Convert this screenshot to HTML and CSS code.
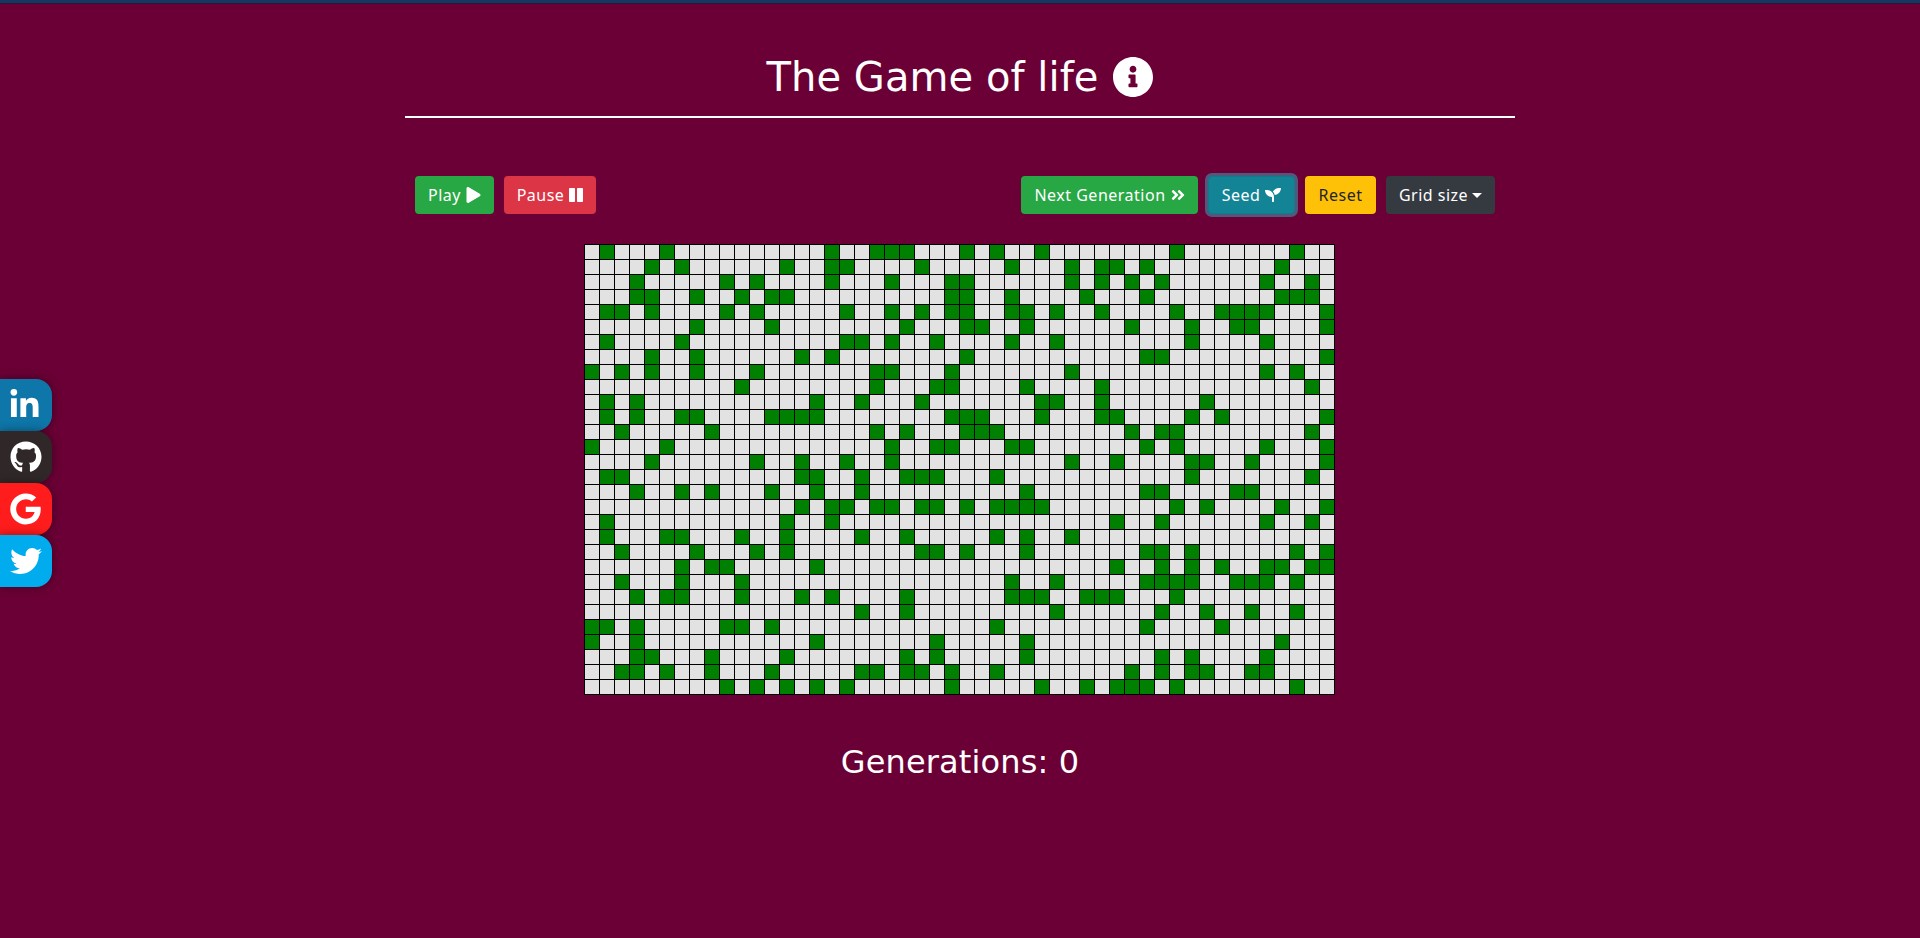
FILE: index.html
```html
<!DOCTYPE html>
<html lang="en">
<head>
<meta charset="utf-8">
<title>The Game of life</title>
<link rel="stylesheet" href="styles.css">
</head>
<body>
<div class="topbar"></div>
<nav class="social">
  <a class="social-link linkedin"><svg class="ico-in" viewBox="0 0 448 512"><path d="M100.28 448H7.4V148.900h92.880zM53.790 108.100C24.090 108.100 0 83.500 0 53.800a53.790 53.790 0 0 1 107.580 0c0 29.700-24.100 54.300-53.790 54.300zM447.900 448h-92.680V302.400c0-34.700-.7-79.200-48.290-79.200-48.290 0-55.690 37.700-55.690 76.700V448h-92.780V148.900h89.080v40.800h1.300c12.400-23.500 42.690-48.300 87.880-48.300 94 0 111.280 61.900 111.280 142.300V448z"/></svg></a>
  <a class="social-link github"><svg class="ico-gh" viewBox="0 0 496 512"><path d="M165.900 397.400c0 2-2.300 3.600-5.200 3.600-3.300.3-5.600-1.300-5.600-3.600 0-2 2.300-3.600 5.200-3.600 3-.3 5.600 1.300 5.600 3.600zm-31.100-4.500c-.7 2 1.300 4.300 4.300 4.900 2.600 1 5.600 0 6.200-2s-1.300-4.300-4.300-5.200c-2.600-.7-5.500.3-6.200 2.300zm44.200-1.700c-2.900.7-4.900 2.600-4.600 4.900.3 2 2.900 3.300 5.900 2.600 2.900-.7 4.900-2.600 4.600-4.600-.3-1.900-3-3.200-5.900-2.900zM244.800 8C106.100 8 0 113.300 0 252c0 110.900 69.800 205.800 169.500 239.200 12.800 2.300 17.300-5.600 17.300-12.100 0-6.200-.3-40.400-.3-61.400 0 0-70 15-84.700-29.800 0 0-11.400-29.100-27.800-36.600 0 0-22.900-15.700 1.600-15.400 0 0 24.900 2 38.600 25.800 21.900 38.600 58.600 27.500 72.900 20.900 2.300-16 8.800-27.100 16-33.700-55.900-6.200-112.300-14.300-112.300-110.500 0-27.500 7.600-41.300 23.600-58.900-2.600-6.500-11.100-33.300 2.600-67.900 20.900-6.500 69 27 69 27 20-5.600 41.500-8.500 62.800-8.500s42.800 2.900 62.800 8.500c0 0 48.100-33.600 69-27 13.700 34.700 5.200 61.400 2.600 67.900 16 17.700 25.800 31.500 25.800 58.900 0 96.500-58.900 104.200-114.800 110.500 9.200 7.900 17 22.900 17 46.400 0 33.700-.3 75.400-.3 83.600 0 6.500 4.600 14.400 17.300 12.100C428.200 457.800 496 362.900 496 252 496 113.300 383.500 8 244.800 8z"/></svg></a>
  <a class="social-link google"><svg class="ico-gg" viewBox="0 0 488 512"><path d="M488 261.800C488 403.300 391.100 504 248 504 110.800 504 0 393.200 0 256S110.800 8 248 8c66.800 0 123 24.500 166.300 64.900l-67.500 64.900C258.500 52.600 94.300 116.600 94.300 256c0 86.500 69.100 156.600 153.700 156.600 98.200 0 135-70.400 140.800-106.900H248v-85.300h236.100c2.300 12.700 3.900 24.900 3.900 41.400z"/></svg></a>
  <a class="social-link twitter"><svg class="ico-tw" viewBox="0 0 512 512"><path d="M459.370 151.716c.325 4.548.325 9.097.325 13.645 0 138.720-105.583 298.558-298.558 298.558-59.452 0-114.680-17.219-161.137-47.106 8.447.974 16.568 1.299 25.340 1.299 49.055 0 94.213-16.568 130.274-44.832-46.132-.975-84.792-31.188-98.112-72.772 6.498.974 12.995 1.624 19.818 1.624 9.421 0 18.843-1.300 27.614-3.573-48.081-9.747-84.143-51.980-84.143-102.985v-1.299c13.969 7.797 30.214 12.670 47.431 13.319-28.264-18.843-46.781-51.005-46.781-87.391 0-19.492 5.197-37.360 14.294-52.954 51.655 63.675 129.300 105.258 216.365 109.807-1.624-7.797-2.599-15.918-2.599-24.040 0-57.828 46.782-104.934 104.934-104.934 30.213 0 57.502 12.670 76.670 33.137 23.715-4.548 46.456-13.320 66.599-25.340-7.798 24.366-24.366 44.833-46.132 57.827 21.117-2.273 41.584-8.122 60.426-16.243-14.292 20.791-32.161 39.308-52.628 54.253z"/></svg></a>
</nav>
<main class="container">
  <h1 class="title"><span class="title-text">The Game of life</span>
    <svg class="info" viewBox="8 8 496 496"><path d="M256 8C119.043 8 8 119.083 8 256c0 136.997 111.043 248 248 248s248-111.003 248-248C504 119.083 392.957 8 256 8zm0 110c23.196 0 42 18.804 42 42s-18.804 42-42 42-42-18.804-42-42 18.804-42 42-42zm56 254c0 6.627-5.373 12-12 12h-88c-6.627 0-12-5.373-12-12v-24c0-6.627 5.373-12 12-12h12v-64h-12c-6.627 0-12-5.373-12-12v-24c0-6.627 5.373-12 12-12h64c6.627 0 12 5.373 12 12v100h12c6.627 0 12 5.373 12 12v24z"/></svg>
  </h1>
  <div class="controls">
    <div class="group">
      <button class="btn play">Play <svg class="i-play" viewBox="0 0 448 512"><path d="M424.400 214.700L72.400 6.600C43.800-10.300 0 6.100 0 47.900V464c0 37.500 40.700 60.100 72.400 41.300l352-208c31.400-18.500 31.500-64.100 0-82.600z"/></svg></button>
      <button class="btn pause">Pause <svg class="i-pause" viewBox="0 0 448 512"><path d="M160 479H32c-18 0-32-14-32-32V63c0-18 14-32 32-32h128c18 0 32 14 32 32v384c0 18-14 32-32 32zm288-32V63c0-18-14-32-32-32H288c-18 0-32 14-32 32v384c0 18 14 32 32 32h128c18 0 32-14 32-32z"/></svg></button>
    </div>
    <div class="group">
      <button class="btn next">Next Generation <svg class="i-next" viewBox="0 0 448 512"><path d="M224.300 273l-136 136c-9.400 9.400-24.600 9.400-33.900 0l-22.600-22.600c-9.400-9.400-9.400-24.600 0-33.900l96.400-96.400-96.400-96.400c-9.400-9.400-9.400-24.600 0-33.900L54.300 103c9.400-9.400 24.600-9.400 33.900 0l136 136c9.500 9.400 9.500 24.600.1 34zm192-34l-136-136c-9.400-9.400-24.600-9.400-33.900 0l-22.600 22.600c-9.400 9.400-9.400 24.600 0 33.900l96.400 96.400-96.400 96.400c-9.400 9.400-9.400 24.600 0 33.900l22.600 22.600c9.400 9.400 24.600 9.400 33.900 0l136-136c9.400-9.200 9.400-24.400 0-33.800z"/></svg></button>
      <button class="btn seed">Seed <svg class="i-seed" viewBox="0 0 512 512"><path d="M64 96H0c0 123.700 100.300 224 224 224v144c0 8.800 7.200 16 16 16h32c8.800 0 16-7.200 16-16V320C288 196.300 187.700 96 64 96zm384-64c-84.200 0-157.400 46.500-195.700 115.200 27.700 30.200 48.200 66.900 59 107.600C424 243.100 512 147.900 512 32h-64z"/></svg></button>
      <button class="btn reset">Reset</button>
      <button class="btn size">Grid size<span class="caret"></span></button>
    </div>
  </div>
  <div class="board" id="board"></div>
  <h2 class="generations">Generations: 0</h2>
</main>
<script src="board.js"></script>
</body>
</html>
```
FILE: styles.css
```css
* { box-sizing: border-box; }
body {
  margin: 0;
  min-height: 938px;
  background: #6a0035;
  color: #fff;
  font-family: "DejaVu Sans", Verdana, sans-serif;
  font-size: 16px;
  line-height: 24px;
  overflow: hidden;
}
svg { fill: currentColor; flex: none; }
.topbar { height: 4px; background: #18375f; border-bottom: 1px solid #2a1440; }
.container { width: 1110px; margin: 0 auto; }
.title {
  display: flex;
  align-items: center;
  justify-content: center;
  gap: 15px;
  height: 114px;
  margin: 0;
  padding-top: 34px;
  border-bottom: 2px solid #fff;
  font-size: 40px;
  font-weight: 400;
  line-height: 48px;
}
.title-text { letter-spacing: 0.05px; white-space: nowrap; }
.info { width: 40px; height: 40px; }
.controls {
  display: flex;
  justify-content: space-between;
  padding: 58px 20px 0 10px;
}
.group { display: flex; gap: 10px; }
.btn {
  display: flex;
  align-items: center;
  justify-content: center;
  gap: 5px;
  height: 38px;
  padding: 0;
  border: 0;
  border-radius: 4px;
  color: #fff;
  font: 16px/24px "Noto Sans", sans-serif;
  letter-spacing: 0.5px;
  white-space: nowrap;
}
.play { width: 79px; background: #28a745; }
.pause { width: 92px; background: #dc3545; }
.next { width: 177px; background: #28a745; }
.seed { width: 87px; background: #138496; border: 1px solid #117a8b; box-shadow: 0 0 0 3px rgba(58, 176, 195, .5); }
.reset { width: 71px; background: #ffc107; color: #212529; }
.size { width: 109px; background: #343a40; gap: 4px; }
.i-play, .i-pause, .i-next { width: 14px; height: 16px; }
.i-play { width: 15px; }
.i-seed { width: 16px; height: 16px; }
.caret {
  border-top: 5px solid #fff;
  border-left: 5px solid transparent;
  border-right: 5px solid transparent;
}
.board {
  display: grid;
  grid-template-columns: repeat(50, 14px);
  grid-auto-rows: 14px;
  gap: 1px;
  width: 751px;
  margin: 30px 0 0 179px;
  padding: 1px;
  background: #000;
}
.cell { background: #e2e2e2; }
.alive { background: #008000; }
.generations {
  margin: 48px 0 0;
  font-size: 32px;
  font-weight: 400;
  line-height: 38px;
  letter-spacing: 0.15px;
  text-align: center;
}
.social {
  position: fixed;
  left: 0;
  top: 379px;
  display: flex;
  flex-direction: column;
}
.social-link {
  display: flex;
  align-items: center;
  width: 52px;
  height: 52px;
  padding-left: 10px;
  border-radius: 0 16px 16px 0;
  box-shadow: 0 0 10px rgba(0, 0, 0, .4);
}
.linkedin { background: #0e76a8; }
.github { background: #302828; }
.google { background: #ff1c1c; }
.twitter { background: #00acee; }
.ico-in { width: 29px; height: 32px; }
.ico-gh { width: 32px; height: 32px; }
.ico-gg { width: 31px; height: 32px; }
.ico-tw { width: 32px; height: 32px; }
```
FILE: board.js
```js
// Columns of the live cells, one entry per row.
const rows = [
  [1,5,16,19,20,21,25,27,30,39,47],
  [4,6,13,16,17,22,28,32,34,35,37,46],
  [3,9,11,16,20,24,25,32,34,36,38,45,48],
  [3,4,7,10,12,13,24,25,28,33,37,46,47,48],
  [1,2,4,9,11,17,20,22,24,25,28,29,31,34,39,42,43,44,45,49],
  [7,12,21,25,26,29,36,40,43,44,49],
  [1,6,17,18,20,23,28,31,40,45],
  [4,7,14,16,25,37,38,49],
  [0,2,4,7,11,19,20,24,32,45,47],
  [10,19,23,24,29,34,48],
  [1,3,15,18,22,30,31,34,41],
  [1,3,6,7,12,13,14,15,24,25,26,30,34,35,40,42,49],
  [2,8,19,21,25,26,27,36,38,39,48],
  [0,5,20,23,24,28,29,37,39,45,49],
  [4,11,14,17,20,32,35,40,41,44,49],
  [1,2,14,15,18,21,22,23,27,40,48],
  [3,6,8,12,15,18,29,37,38,43,44],
  [14,16,17,19,20,22,23,25,27,28,29,30,39,41,46,49],
  [1,13,16,35,38,45,48],
  [1,5,6,10,13,18,21,27,29,32],
  [2,7,11,13,22,23,25,29,37,38,40,47,49],
  [6,8,9,15,35,38,40,42,45,46,48,49],
  [2,6,10,28,31,37,38,39,40,43,44,45,47],
  [3,5,6,10,14,16,21,28,29,30,33,34,35,39],
  [18,21,31,38,41,44,47],
  [0,1,3,9,10,12,27,37,42],
  [0,3,15,23,29,46],
  [3,4,8,13,21,23,29,38,40,45],
  [2,3,5,8,12,18,19,21,22,24,27,36,38,40,41,44,45],
  [9,11,13,15,17,24,30,33,35,36,37,39,47]
];
const board = document.getElementById('board');
for (const live of rows) {
  for (let c = 0; c < 50; c++) {
    const cell = document.createElement('div');
    cell.className = live.includes(c) ? 'cell alive' : 'cell';
    board.appendChild(cell);
  }
}
```
